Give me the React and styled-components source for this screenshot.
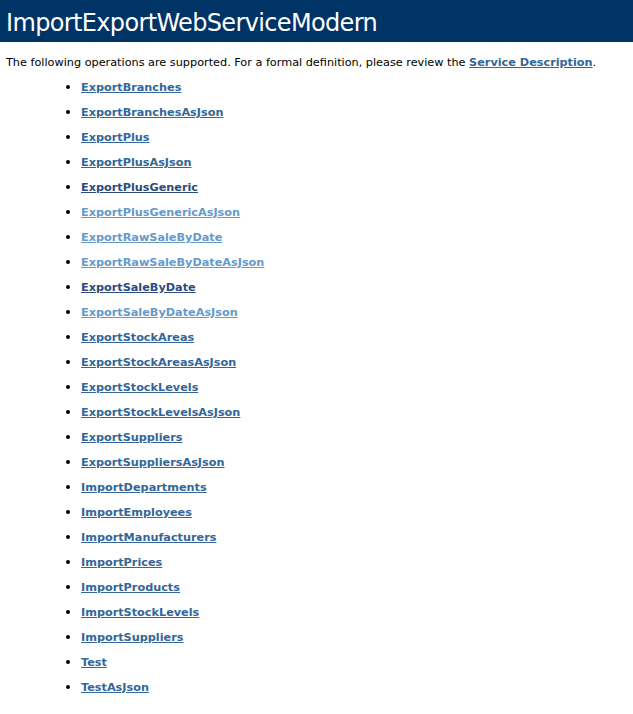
import React from 'react';
import styled, { createGlobalStyle } from 'styled-components';

const GlobalStyle = createGlobalStyle`
    body {
        margin: 0;
        background: #ffffff;
        color: #000000;
        font-family: "DejaVu Sans", Verdana, sans-serif;
    }
`;

const Heading = styled.div`
    background-color: #003366;
    color: #ffffff;
    font-family: "DejaVu Sans", Tahoma, sans-serif;
    font-size: 24px;
    font-weight: normal;
    height: 42px;
    box-sizing: border-box;
    padding: 9px 0 0 6px;
    letter-spacing: -0.65px;
`;

const Content = styled.div`
    padding: 14px 0 0 6px;
    font-size: 11.25px;
`;

const Intro = styled.p`
    margin: 0 0 11px 0;
`;

const OpList = styled.ul`
    margin: 0;
    padding-left: 75px;
`;

const OpItem = styled.li`
    height: 13px;
    line-height: 13px;
    margin-bottom: 12px;

    &::marker {
        font-size: 13px;
    }
`;

const OpLink = styled.a`
    font-weight: bold;
    text-decoration: underline;
    color: ${({ $state }) =>
        $state === 'visited' ? '#6699cc' : $state === 'active' ? '#2c4a7c' : '#336699'};
`;

const operations = [
    ['ExportBranches'],
    ['ExportBranchesAsJson'],
    ['ExportPlus'],
    ['ExportPlusAsJson'],
    ['ExportPlusGeneric', 'active'],
    ['ExportPlusGenericAsJson', 'visited'],
    ['ExportRawSaleByDate', 'visited'],
    ['ExportRawSaleByDateAsJson', 'visited'],
    ['ExportSaleByDate', 'active'],
    ['ExportSaleByDateAsJson', 'visited'],
    ['ExportStockAreas'],
    ['ExportStockAreasAsJson'],
    ['ExportStockLevels'],
    ['ExportStockLevelsAsJson'],
    ['ExportSuppliers'],
    ['ExportSuppliersAsJson'],
    ['ImportDepartments'],
    ['ImportEmployees'],
    ['ImportManufacturers'],
    ['ImportPrices'],
    ['ImportProducts'],
    ['ImportStockLevels'],
    ['ImportSuppliers'],
    ['Test'],
    ['TestAsJson'],
];

const App = () => (
    <React.Fragment>
        <GlobalStyle />
        <Heading>ImportExportWebServiceModern</Heading>
        <Content>
            <Intro>
                The following operations are supported. For a formal definition, please review the{' '}
                <OpLink href="#wsdl">Service Description</OpLink>.
            </Intro>
            <OpList>
                {operations.map(([name, state]) => (
                    <OpItem key={name}>
                        <OpLink href={`#op=${name}`} $state={state}>{name}</OpLink>
                    </OpItem>
                ))}
            </OpList>
        </Content>
    </React.Fragment>
);

export default App;
